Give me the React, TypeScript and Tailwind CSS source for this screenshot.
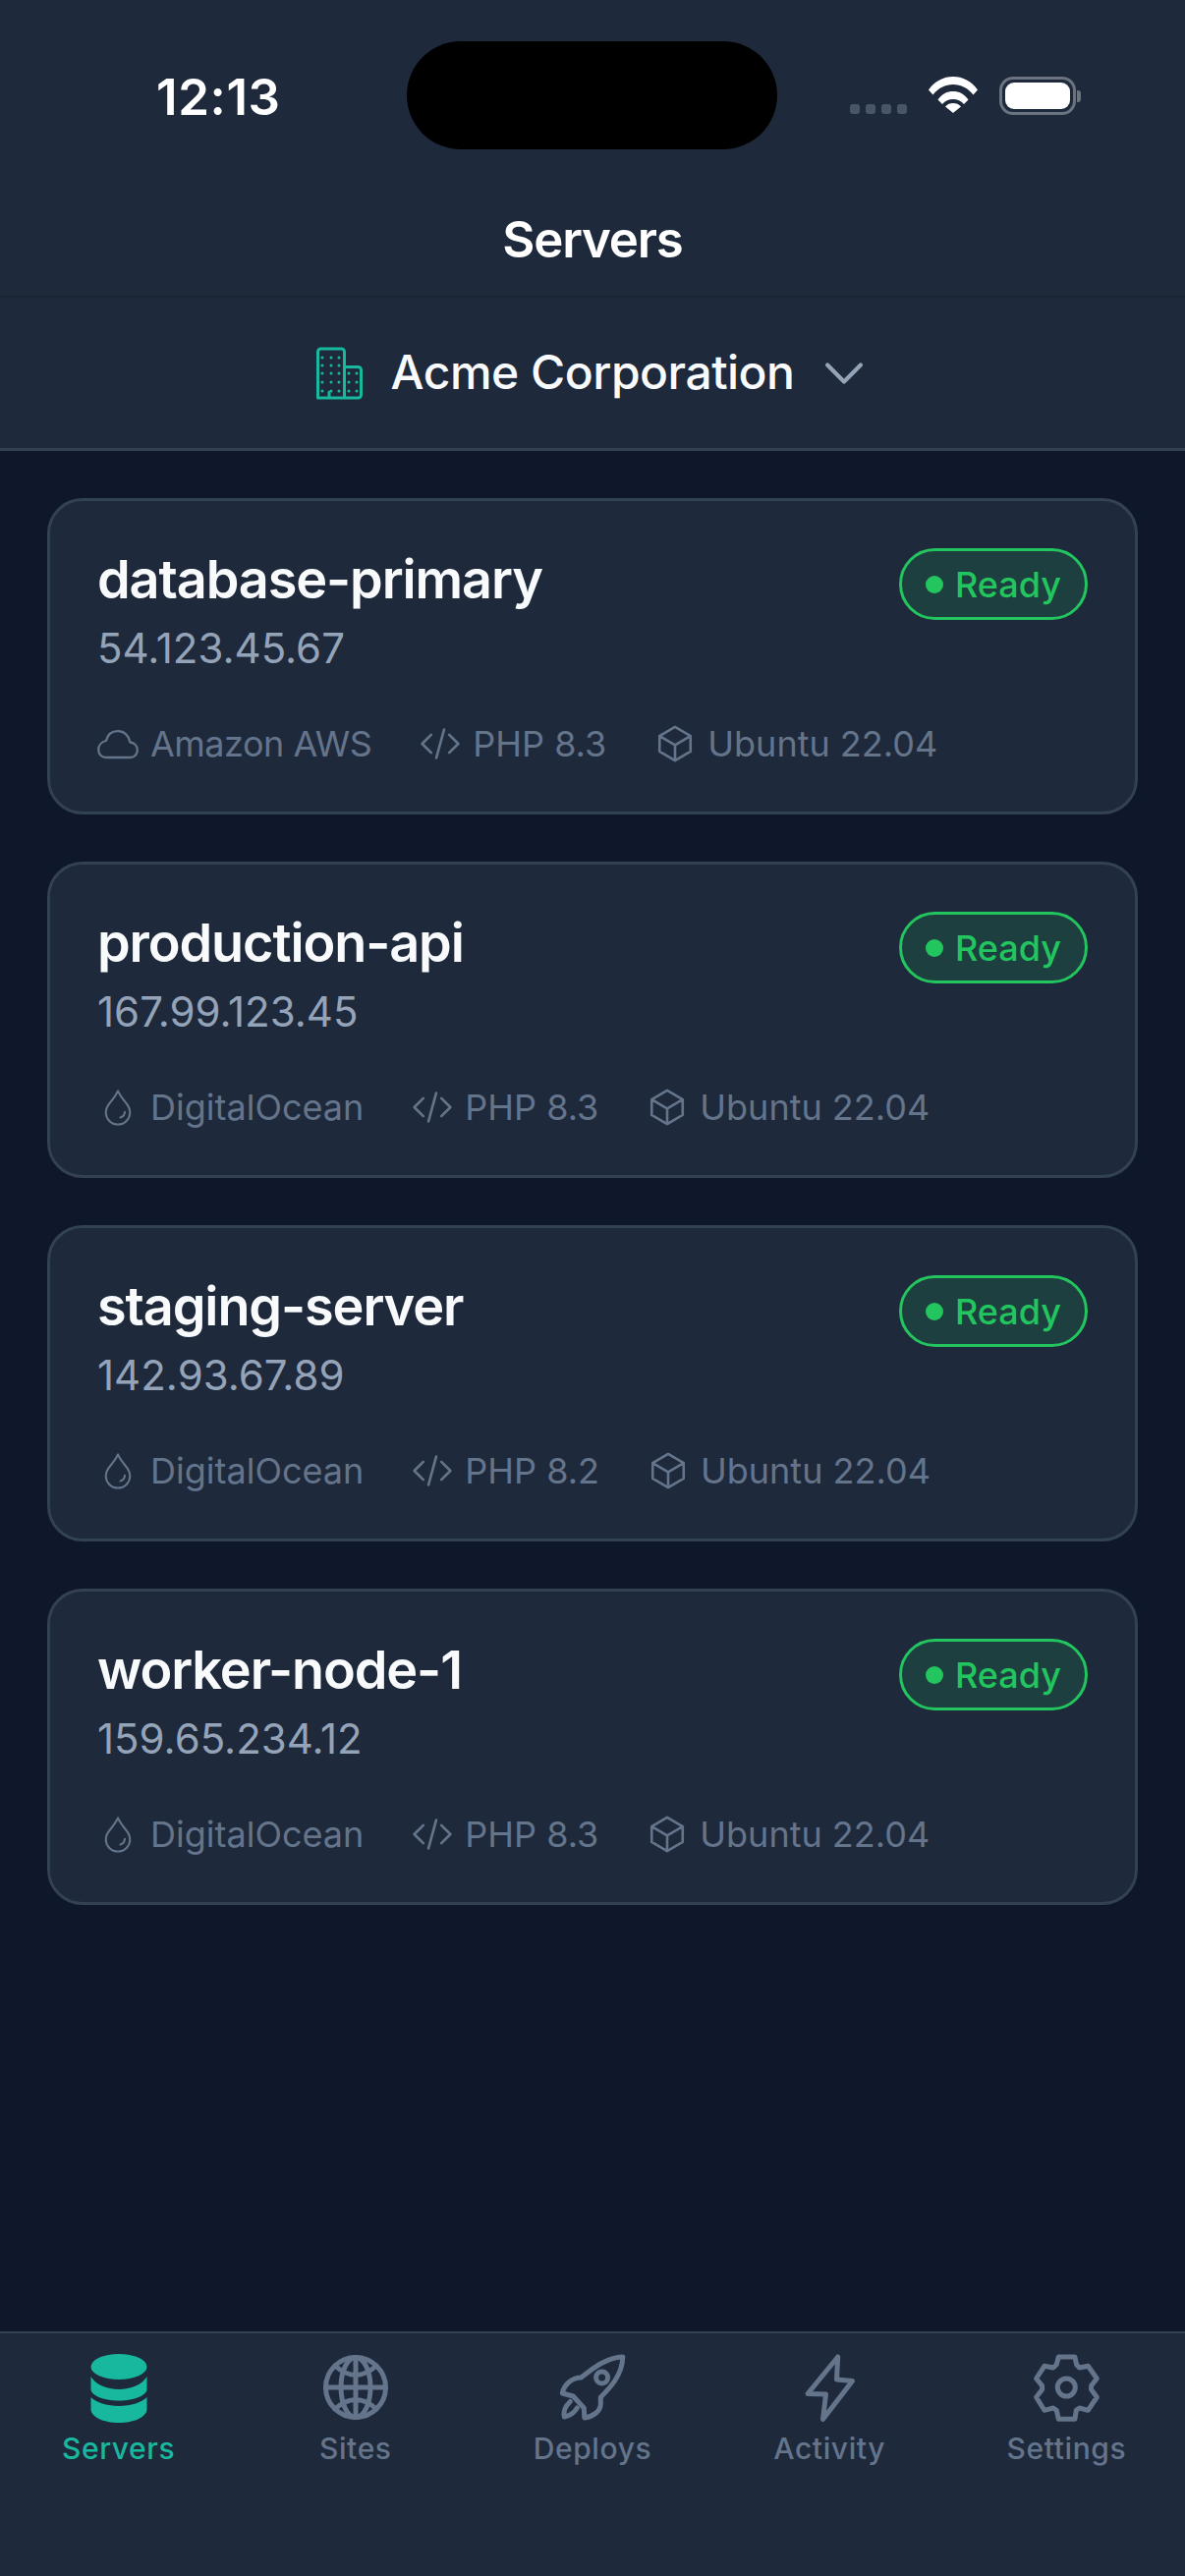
import type { ReactNode } from "react";
import { HiOutlineChevronDown, HiOutlineCodeBracket, HiOutlineCube } from "react-icons/hi2";

const servers = [
  { name: "database-primary", ip: "54.123.45.67", provider: "Amazon AWS", php: "PHP 8.3" },
  { name: "production-api", ip: "167.99.123.45", provider: "DigitalOcean", php: "PHP 8.3" },
  { name: "staging-server", ip: "142.93.67.89", provider: "DigitalOcean", php: "PHP 8.2" },
  { name: "worker-node-1", ip: "159.65.234.12", provider: "DigitalOcean", php: "PHP 8.3" },
];

function TabSvg({ box, children }: { box: string; children: ReactNode }) {
  return (
    <svg width="72" height="72" viewBox={box} fill="none" stroke="currentColor" strokeWidth="5" strokeLinecap="round" strokeLinejoin="round">
      {children}
    </svg>
  );
}

function DatabaseIcon() {
  return (
    <svg width="72" height="72" viewBox="0 0 72 72" fill="currentColor">
      <ellipse cx="36" cy="15" rx="28.5" ry="13" />
      <path d="M7.500 25C12 33 24 38 36 38S60 33 64.500 25V38C64.500 44 52 49.500 36 49.500S7.500 44 7.500 38Z" />
      <path d="M7.500 46C12 51 24 55 36 55S60 51 64.500 46V58C64.500 66 52 72 36 72S7.500 66 7.500 58Z" />
    </svg>
  );
}

function GlobeIcon() {
  return (
    <TabSvg box="0 0 72 72">
      <ellipse cx="36" cy="36" rx="30.5" ry="30.5" />
      <ellipse cx="36" cy="36" rx="15" ry="30.5" />
      <path d="M36 5.500V66.500M5.500 36H66.500M15 14Q36 33 57 14M15 58Q36 39 57 58" />
    </TabSvg>
  );
}

function RocketIcon() {
  return (
    <TabSvg box="16.7 9 72 72">
      <path d="M83.500 14C75 14 62 19 53 26L41 35C33 35 24 41 22 51L33 54L44 66L44.500 76C52 75 61 70 61 62L61 55C70 46 83 33 83.500 14Z" />
      <path d="M30 59.500C25 64 23 70 24 75C29 74 34 71 37 66" />
      <circle cx="62.300" cy="35" r="6" />
    </TabSvg>
  );
}

function BoltIcon() {
  return (
    <TabSvg box="14 9 72 72">
      <path d="M58.700 14L57.500 37L73.500 38.500L43.500 77.500L46.500 52L28 51.500Z" />
    </TabSvg>
  );
}

function GearIcon() {
  return (
    <TabSvg box="14.400 9 72 72">
      <path d="M42.700 14H59.300L61 21.700L64 25L72.700 23.300L81.700 36L76 43.300V47.300L81.700 55L72.700 68.300L64 66L60.700 68.300L59.300 77.300H42.700L40.700 68.300L37.300 66L28.300 68.300L20 55L26 47.300V43.300L20 36L28.300 23.300L37.300 25L40.700 21.700Z" />
      <circle cx="50.700" cy="45" r="9" />
    </TabSvg>
  );
}

const tabs = [
  { label: "Servers", icon: <DatabaseIcon />, active: true },
  { label: "Sites", icon: <GlobeIcon /> },
  { label: "Deploys", icon: <RocketIcon /> },
  { label: "Activity", icon: <BoltIcon /> },
  { label: "Settings", icon: <GearIcon /> },
];

function BuildingIcon() {
  const tall = [6, 15, 23].flatMap((x) => [11, 19, 27, 36, 45].map((y) => [x, y]));
  const short = [33, 41].flatMap((x) => [27, 36, 45].map((y) => [x, y]));
  return (
    <svg width="54" height="54" viewBox="0 0 54 54" fill="none" className="text-[#18b89f]">
      <path
        d="M3.500 52V5a3 3 0 0 1 3-3h21a3 3 0 0 1 3 3v47M30.500 20.500h14a3 3 0 0 1 3 3V49a3 3 0 0 1-3 3h-41M15 52v-6"
        stroke="currentColor"
        strokeWidth="3"
        strokeLinecap="round"
        strokeLinejoin="round"
      />
      {[...tall, ...short].map(([x, y]) => (
        <circle key={`${x}-${y}`} cx={x + 2} cy={y} r="1.5" fill="currentColor" />
      ))}
    </svg>
  );
}

function DropIcon() {
  return (
    <svg width="42" height="42" viewBox="0 0 24 24" fill="none" stroke="currentColor" strokeWidth="1.2" strokeLinecap="round" strokeLinejoin="round">
      <path d="M12 22a7 7 0 0 0 7-7c0-2-.9-3.900-2.700-6C14.700 7 12.800 4.500 12 2.500c-.8 2-2.700 4.500-4.300 6.500C5.900 11.100 5 13 5 15a7 7 0 0 0 7 7z" />
      <path d="M16 14.800a3.600 3.600 0 0 1-2.600 3.200" />
    </svg>
  );
}

function CloudIcon() {
  return (
    <svg width="42" height="42" viewBox="0 0 42 42" fill="none" stroke="currentColor" strokeWidth="2.300" strokeLinejoin="round">
      <path d="M9 35H33.500C38 35 40.800 31.500 40.800 27.500C40.800 23 37.500 20 33.500 19.500C32 12.500 27 8.200 21 8.200C15 8.200 10.500 12 9 18C4.500 19 1.200 22.500 1.200 27C1.200 31.500 4.500 35 9 35Z" />
    </svg>
  );
}

function WifiIcon() {
  return (
    <svg width="50" height="37" viewBox="0 0 50 37" fill="white">
      <path d="M0 13.500C6.500 4.500 15 0 25 0s18.500 4.500 25 13.500L45.500 18.500C40 11.500 33 8 25 8S10 11.500 4.500 18.500Z" />
      <path d="M9.500 23.500C13.500 17.500 19 15 25 15s11.500 2.500 15.500 8.500L36 28C33 24.500 29.500 23 25 23s-8 1.500-11 5Z" />
      <path d="M17 30.500C19 28 22 27 25 27s6 1 8 3.500L25 37Z" />
    </svg>
  );
}

function StatusBar() {
  return (
    <div className="relative h-[162px] shrink-0">
      <span className="absolute left-[159px] top-[68px] text-[51px] leading-[62px] font-semibold text-white tracking-[0.6px]">12:13</span>
      <div className="absolute left-[414px] top-[42px] w-[377px] h-[110px] rounded-[55px] bg-black" />
      <div className="absolute left-[865px] top-[78px] flex items-end">
        <div className="flex gap-[6px] mb-[1px]">
          <span className="w-[10px] h-[10px] rounded-[3px] bg-[#475569]" />
          <span className="w-[10px] h-[10px] rounded-[3px] bg-[#475569]" />
          <span className="w-[10px] h-[10px] rounded-[3px] bg-[#475569]" />
          <span className="w-[10px] h-[10px] rounded-[3px] bg-[#475569]" />
        </div>
        <div className="ml-[22px] mb-[2px]">
          <WifiIcon />
        </div>
        <div className="ml-[22px] flex items-center">
          <div className="w-[78px] h-[39px] rounded-[14px] border-[3px] border-[#6b7280] p-[3px]">
            <div className="w-full h-full rounded-[9px] bg-white" />
          </div>
          <div className="w-[4px] h-[12px] rounded-r-[3px] bg-[#6b7280] ml-[1px]" />
        </div>
      </div>
    </div>
  );
}

function Meta({ icon, label, tight }: { icon: ReactNode; label: string; tight?: boolean }) {
  return (
    <div className="flex items-center gap-[12px]">
      <span className="w-[42px] h-[42px] flex items-center justify-center shrink-0">{icon}</span>
      <span className={tight ? "text-[36px] leading-[42px] tracking-[-0.5px]" : "text-[36px] leading-[42px]"}>{label}</span>
    </div>
  );
}

function ServerCard({ name, ip, provider, php }: { name: string; ip: string; provider: string; php: string }) {
  const aws = provider === "Amazon AWS";
  return (
    <div className="h-[322px] rounded-[36px] border-[3px] border-[#334155] bg-[#1e293b] p-[48px] flex flex-col">
      <div className="flex items-start justify-between">
        <div>
          <div className="text-[54px] leading-[64px] font-semibold tracking-[-1.1px] text-[#f8fafc]">{name}</div>
          <div className="mt-[6px] text-[42px] leading-[63px] text-[#94a3b8]">{ip}</div>
        </div>
        <div className="h-[73px] flex items-center gap-[12px] rounded-full border-[3px] border-[#22c55e] bg-[#22c55e]/15 px-[24px] text-[36px] font-medium text-[#22c55e]">
          <span className="w-[18px] h-[18px] rounded-full bg-[#22c55e]" />
          Ready
        </div>
      </div>
      <div className="mt-auto flex items-center gap-[49px] text-[#64748b]">
        <Meta icon={aws ? <CloudIcon /> : <DropIcon />} label={provider} tight={aws} />
        <Meta icon={<HiOutlineCodeBracket size={42} />} label={php} />
        <Meta icon={<HiOutlineCube size={42} />} label="Ubuntu 22.04" />
      </div>
    </div>
  );
}

export default function App() {
  return (
    <div className="w-[1206px] h-[2622px] flex flex-col bg-[#0f172a] font-['Inter',sans-serif]">
      <header className="bg-[#1e293b] border-b-[3px] border-[#334155]">
        <StatusBar />
        <div className="h-[141px] pt-[26px] flex items-center justify-center border-b-[2px] border-[#1a2433] text-[51px] font-semibold tracking-[-1.2px] text-white">
          Servers
        </div>
        <div className="h-[153px] flex items-center justify-center">
          <BuildingIcon />
          <span className="ml-[24px] mb-[2px] text-[48px] font-medium tracking-[-0.5px] text-[#f8fafc]">Acme Corporation</span>
          <HiOutlineChevronDown size={54} strokeWidth={1.9} className="ml-[24px] text-[#94a3b8]" />
        </div>
      </header>

      <main className="flex-1 px-[48px] pt-[48px] flex flex-col gap-[48px]">
        {servers.map((s) => (
          <ServerCard key={s.name} {...s} />
        ))}
      </main>

      <nav className="h-[249px] border-t-[2px] border-[#334155] bg-[#1e293b] flex pt-[19px]">
        {tabs.map((t) => (
          <div key={t.label} className={`flex-1 flex flex-col items-center ${t.active ? "text-[#18b89f]" : "text-[#64748b]"}`}>
            {t.icon}
            <span className="mt-[6px] text-[30px] leading-[40px] font-medium tracking-[0.6px]">{t.label}</span>
          </div>
        ))}
      </nav>
    </div>
  );
}
